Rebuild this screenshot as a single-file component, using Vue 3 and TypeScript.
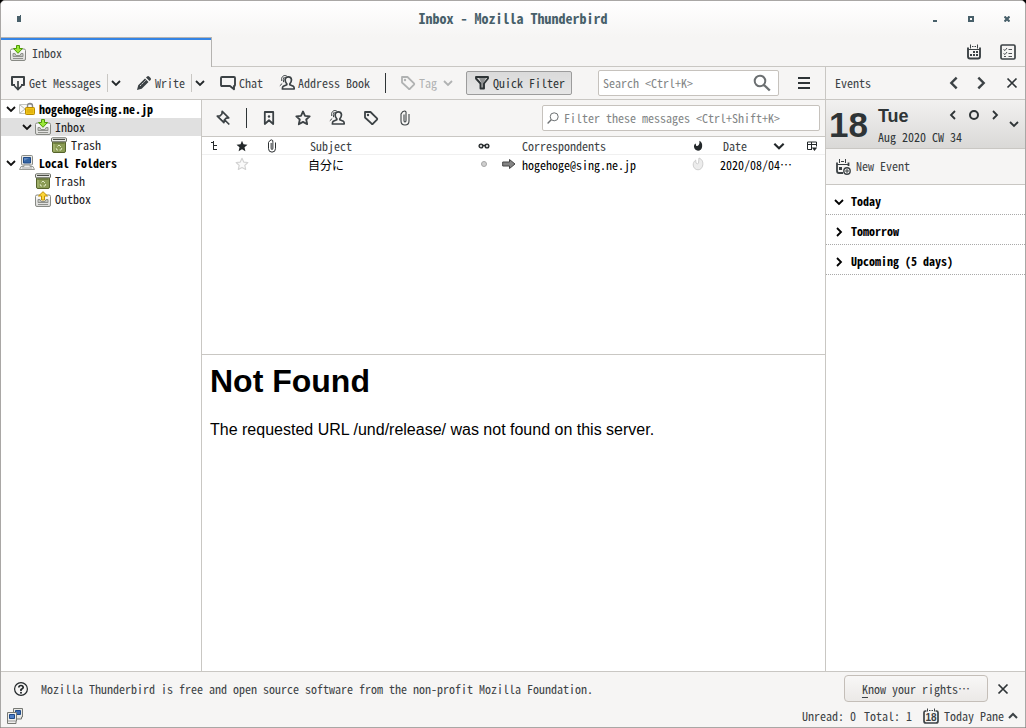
<script setup lang="ts">
import { ref } from 'vue'

interface Folder {
  name: string
  icon: string
  level: number
  account?: boolean
  open?: boolean
}

const folders: Folder[] = [
  { name: 'hogehoge@sing.ne.jp', icon: 'account', level: 0, account: true, open: true },
  { name: 'Inbox', icon: 'inbox', level: 1, open: true },
  { name: 'Trash', icon: 'trash', level: 2 },
  { name: 'Local Folders', icon: 'computer', level: 0, account: true, open: true },
  { name: 'Trash', icon: 'trash', level: 1 },
  { name: 'Outbox', icon: 'outbox', level: 1 },
]
const selected = ref(1)

const quickFilters = [
  { icon: 'bookmark', label: 'Unread' },
  { icon: 'star', label: 'Starred' },
  { icon: 'contact', label: 'Contact' },
  { icon: 'tag', label: 'Tags' },
  { icon: 'clip', label: 'Attachment' },
]

const agenda = ref([
  { name: 'Today', open: true },
  { name: 'Tomorrow', open: false },
  { name: 'Upcoming (5 days)', open: false },
])

const search = ref('')
const filter = ref('')
</script>

<template>
  <svg class="sprite" aria-hidden="true">
    <linearGradient id="paper" x1="0" y1="0" x2="0" y2="1">
      <stop offset="0" stop-color="#fff" /><stop offset="1" stop-color="#d8d8d5" />
    </linearGradient>
    <symbol id="down" viewBox="0 0 12 12"><path d="M2 4l4 4 4-4" fill="none" stroke="currentColor" stroke-width="1.800" /></symbol>
    <symbol id="right" viewBox="0 0 12 12"><path d="M4 2l4 4-4 4" fill="none" stroke="currentColor" stroke-width="1.800" /></symbol>
    <symbol id="left" viewBox="0 0 12 12"><path d="M8 2L4 6l4 4" fill="none" stroke="currentColor" stroke-width="1.800" /></symbol>
    <symbol id="up" viewBox="0 0 12 12"><path d="M2 8l4-4 4 4" fill="none" stroke="currentColor" stroke-width="2" /></symbol>
    <symbol id="close" viewBox="0 0 12 12"><path d="M1.500 1.500l9 9M10.500 1.500l-9 9" fill="none" stroke="currentColor" stroke-width="1.700" /></symbol>
    <symbol id="get" viewBox="0 0 16 16">
      <path d="M5 10H2V2h12v8h-3" fill="none" stroke="currentColor" stroke-width="2" stroke-linejoin="round" />
      <path d="M8 6v8.500M4.500 11L8 14.500l3.500-3.500" fill="none" stroke="currentColor" stroke-width="1.700" />
    </symbol>
    <symbol id="pencil" viewBox="0 0 16 16">
      <path d="M1 15l1.200-4.700L9 3.500l3.500 3.500-6.800 6.800zM10 2.500l1.100-1.100q1-.9 2 0l1.500 1.500q.9 1 0 2L13.500 6z" fill="currentColor" />
      <path d="M4 11l6-6" stroke="#f6f5f4" stroke-width=".8" stroke-dasharray="2 1" />
    </symbol>
    <symbol id="chat" viewBox="0 0 16 16"><path d="M2 2h12q1 0 1 1v7q0 1-1 1v3.200L10 11H2q-1 0-1-1V3q0-1 1-1z" fill="none" stroke="currentColor" stroke-width="1.900" stroke-linejoin="round" /></symbol>
    <symbol id="contact" viewBox="0 0 16 16">
      <path d="M9.300 1.800c4 0 3.800 4.700 1.500 7v1l3.500 1.500q.9.500.9 2.700H3.400q0-2.200.9-2.700l3.500-1.500v-1c-2.300-2.300-2.500-7 1.500-7z" fill="none" stroke="currentColor" stroke-width="1.700" stroke-linejoin="round" />
      <path d="M7.500.6C4-.2 1.800 2.500 2.800 6M5.300 2Q3.600 4.200 4.600 7.200M3.200 8.500L.8 10.800" fill="none" stroke="currentColor" stroke-width="1" />
    </symbol>
    <symbol id="tag" viewBox="0 0 16 16">
      <path d="M2 2h5.500l6.500 6.300q.6.700 0 1.400l-4 4q-.7.600-1.400 0L2 7.500z" fill="none" stroke="currentColor" stroke-width="1.800" stroke-linejoin="round" />
      <circle cx="5" cy="5" r="1.200" fill="currentColor" />
    </symbol>
    <symbol id="funnel" viewBox="0 0 16 16">
      <path d="M5 3h7L9.500 8v5h-2V8z" fill="currentColor" opacity=".45" />
      <path d="M2 2h12v1.500L10 8.500v5H6.500V8.500L2 3.500z" fill="none" stroke="currentColor" stroke-width="1.900" stroke-linejoin="round" />
    </symbol>
    <symbol id="glass" viewBox="0 0 18 18"><circle cx="7" cy="7" r="5.300" fill="none" stroke="currentColor" stroke-width="2" /><path d="M11 11l5.800 5.500" stroke="currentColor" stroke-width="2.400" /></symbol>
    <symbol id="glass-thin" viewBox="0 0 12 12"><circle cx="7.200" cy="4.800" r="4" fill="none" stroke="currentColor" /><path d="M4.200 7.800L.6 11.400" stroke="currentColor" stroke-width="1.400" /></symbol>
    <symbol id="menu" viewBox="0 0 16 16"><path d="M2 3h12M2 8h12M2 13h12" stroke="currentColor" stroke-width="2" /></symbol>
    <symbol id="pin" viewBox="0 0 16 16"><path d="M7.200 2.300l6.500 6.500-2.500.4-1.900 1.900-.4 2.600-6.600-6.600 2.700-.3L6.900 5zM9.300 10.500l5 5" transform="translate(0 -1)" fill="none" stroke="currentColor" stroke-width="1.700" stroke-linejoin="round" /><path d="M2.500 6L8 11.500" stroke="currentColor" /></symbol>
    <symbol id="bookmark" viewBox="0 0 16 16"><path d="M3.800 2h8.400v12L8 10.300 3.800 14z" fill="none" stroke="currentColor" stroke-width="1.800" stroke-linejoin="round" /><circle cx="8" cy="6.500" r="1.200" fill="currentColor" /></symbol>
    <symbol id="star" viewBox="0 0 16 16"><path d="M8 1.500l2 4.300 4.700.5-3.500 3.200 1 4.700L8 11.900l-4.200 2.300 1-4.700L1.300 6.300 6 5.800z" fill="none" stroke="currentColor" stroke-width="1.800" stroke-linejoin="round" /></symbol>
    <symbol id="star-pale" viewBox="0 0 16 16"><path d="M8 1.500l2 4.300 4.700.5-3.500 3.200 1 4.700L8 11.900l-4.200 2.300 1-4.700L1.300 6.300 6 5.800z" fill="#fafafa" stroke="#d2d2d2" stroke-width="1.300" stroke-linejoin="round" /></symbol>
    <symbol id="clip" viewBox="0 0 16 16"><path d="M7 4.500v6q0 1.500 1 1.500t1-1.500V4Q9.500 1 7.500 1T4 4v7q0 4 4 4t4-4V4" fill="none" stroke="currentColor" stroke-width="1.100" /></symbol>
    <symbol id="star-solid" viewBox="0 0 12 12"><path d="M6 .8l1.500 3.500 4 .4-3 2.600.9 3.900L6 9.200l-3.400 2 .9-3.900-3-2.600 4-.4z" fill="currentColor" /></symbol>
    <symbol id="thread" viewBox="0 0 12 12"><path d="M2 2.500h3M4.500 1v9M5 5.500h3M5 9.500h3" stroke="currentColor" fill="none" stroke-width="1" /></symbol>
    <symbol id="glasses" viewBox="0 0 12 12"><circle cx="3" cy="6" r="1.900" fill="#ccc" stroke="currentColor" stroke-width="1.300" /><circle cx="9" cy="6" r="1.900" fill="#ccc" stroke="currentColor" stroke-width="1.300" /><path d="M4.500 5.500h3" stroke="currentColor" stroke-width="1.500" /></symbol>
    <symbol id="flame" viewBox="0 0 12 14"><path d="M7.500 1c3 1.500 3.700 4 3.300 6.800C10.400 11 8.500 12.500 6 12.500S1.500 10.800 1.300 8C1.200 6 2 4.800 3.200 4L4 7c2 .8 4.500-2 3.500-6z" fill="currentColor" /></symbol>
    <symbol id="flame-pale" viewBox="0 0 12 14"><path d="M7 1c3.500 1.500 4 4 3.800 6.800C10.400 11 8.500 12.800 6 12.800S1.300 10.800 1.200 8c0-2 .6-3.500 2.500-5L4 6l1.500 1 1-1z" fill="#ececec" stroke="#cacaca" stroke-width=".9" /></symbol>
    <symbol id="columns" viewBox="0 0 12 12"><path d="M6 9.500H1.500V2h9v4.500M1.500 4.500h9M5.500 2v7" fill="none" stroke="currentColor" stroke-width="1" /><path d="M5.800 7.500h5.400L8.500 11z" fill="currentColor" /></symbol>
    <symbol id="arrow" viewBox="0 0 14 12"><path d="M.7 4h6.800V1.500L13 6l-5.500 4.500V8H.7z" fill="#858585" stroke="#444" stroke-width="1" /></symbol>
    <symbol id="calendar" viewBox="0 0 16 16">
      <path d="M2 3.500v9q0 2 2 2h8q2 0 2-2v-9" fill="none" stroke="currentColor" stroke-width="1.900" /><path d="M4.500.5v4M11.500.5v4M6 2.500h1.500M8.500 2.500H10M2 5.500h12" stroke="currentColor" />
      <path d="M7 8h2M10 8h2M4 11h2M7 11h2M10 11h2" stroke="currentColor" stroke-width="1.800" />
    </symbol>
    <symbol id="tasks" viewBox="0 0 16 16"><rect x="1" y="1" width="14" height="14" rx="1.200" fill="none" stroke="currentColor" stroke-width="1.700" /><path d="M3.500 5.500L5 6.500 7 4M3.500 9.500L5 10.500 7 8M4 12.500h2M8.500 5.500H12M8.500 9.500H12M8.500 12.500H12" fill="none" stroke="currentColor" stroke-width=".9" /></symbol>
    <symbol id="new-event" viewBox="0 0 16 16">
      <path d="M8 14H4Q2 14 2 12V3.500M13.500 3.500V7" fill="none" stroke="currentColor" stroke-width="1.800" /><path d="M4.500 0v4M10.500 0v4M6 2.500h3M2 5.500h11" stroke="currentColor" />
      <path d="M4 8h3v3H4z" fill="currentColor" /><circle cx="12" cy="12" r="3.200" fill="none" stroke="currentColor" stroke-width="1.400" /><path d="M12 10v4M10 12h4" stroke="currentColor" />
    </symbol>
    <symbol id="inbox" viewBox="0 0 16 16">
      <path d="M2 4h12q1.500 0 1.500 1.500V14q0 1.500-1.500 1.500H2Q.5 15.500.5 14V5.500Q.5 4 2 4z" fill="url(#paper)" stroke="#888a85" /><path d="M3 8.500h2l1 2h4l1-2h2v3H3zM3 13.500h10" fill="#c4c6c1" stroke="#8f918c" />
      <path d="M6.500.5h3v3h3L8 8.300 3.500 3.500h3z" fill="#9be83b" stroke="#4e9a06" />
    </symbol>
    <symbol id="outbox" viewBox="0 0 16 16">
      <path d="M2 4h12q1.500 0 1.500 1.500V14q0 1.500-1.500 1.500H2Q.5 15.500.5 14V5.500Q.5 4 2 4z" fill="url(#paper)" stroke="#888a85" /><path d="M3 8.500h2l1 2h4l1-2h2v3H3zM3 13.500h10" fill="#c4c6c1" stroke="#8f918c" />
      <path d="M6.500 9h3V5h3L8 .7 3.500 5h3z" fill="#fcd63a" stroke="#c49102" />
    </symbol>
    <symbol id="trash" viewBox="0 0 16 16">
      <path d="M1.500 4.500h13v9.500q0 1.500-1.500 1.500H3q-1.500 0-1.500-1.500z" fill="#8b9c55" stroke="#55632b" /><path d="M2.500 6h11" stroke="#55632b" /><path d="M3 7v7.500" stroke="#b3c17e" /><path d="M1.500.8h13q1 0 1 1V4q0 .8-1 .8h-13q-1 0-1-.8V1.800q0-1 1-1z" fill="#e8e9e5" stroke="#6b6e66" /><path d="M2 2.500h12" stroke="#4a4d46" stroke-width="1.200" />
      <path d="M6.500 9.500L8 8l2 2M10.800 11L10 13H8.500M7 13H5.800l-.6-1.800" fill="none" stroke="#dfe8c2" />
    </symbol>
    <symbol id="account" viewBox="0 0 16 16">
      <path d="M.5 3.500h13v9H.5z" fill="#fafafa" stroke="#c3c5c0" /><path d="M1 4l5 4-5 4" fill="none" stroke="#b5b7b2" /><path d="M8.500 7.500V5q0-2.500 2.500-2.500T13.500 5v2.500" fill="none" stroke="#888" stroke-width="1.400" /><rect x="6.500" y="6.500" width="9" height="7" rx=".8" fill="#f0c419" stroke="#b88a00" /><path d="M8 9h6M8 11h6" stroke="#d6a409" />
    </symbol>
    <symbol id="computer" viewBox="0 0 16 16">
      <rect x="2.500" y=".5" width="11" height="9.500" rx="1" fill="#e8e8e5" stroke="#888a85" /><path d="M4.500 2.500h7v5.500h-7z" fill="#3465a4" stroke="#204a87" /><path d="M5 3h5L5 6z" fill="#6289c0" /><path d="M5 10h6v1.500h3l1.500 3H.5l1.500-3h3z" fill="#ececea" stroke="#9a9c97" /><path d="M3 13h10" stroke="#aaa" />
    </symbol>
    <symbol id="online" viewBox="0 0 16 16">
      <path d="M6.500.5h9v8.500h-1v2h-7V9h-1z" fill="#e8e8e5" stroke="#777974" /><path d="M8.500 2.500h5v4h-5z" fill="#3f6db5" stroke="#204a87" /><path d="M.5 4.500h9V13h-.5v2.500H.5z" fill="#eeeeec" stroke="#777974" /><path d="M2.500 6.500h5v4h-5z" fill="#4f7fc6" stroke="#204a87" /><path d="M1 13h8" stroke="#999" />
    </symbol>
    <symbol id="help" viewBox="0 0 16 16"><circle cx="8" cy="8" r="6.400" fill="none" stroke="currentColor" stroke-width="1.200" /><path d="M5.800 6.500Q6 4.500 8 4.500t2.200 2Q10.200 7.500 8 8.500v1.500" fill="none" stroke="currentColor" stroke-width="1.700" /><circle cx="8" cy="11.800" r="1" fill="currentColor" /></symbol>
    <symbol id="day-frame" viewBox="0 0 16 16"><path d="M3.500 3H2.500Q1 3 1 4.500V13q0 2 2 2h10q2 0 2-2V4.500Q15 3 13.500 3h-1" fill="none" stroke="currentColor" stroke-width="1.700" /><path d="M4.500.5v3M11.500.5v3M6 2.500h1.500M8.500 2.500H10" stroke="currentColor" /></symbol>
  </svg>

  <div class="window">
    <header class="titlebar">
      <button class="win-menu" aria-label="Window menu"><svg viewBox="0 0 6 8"><path d="M1 1h3V0h1v7H1z" fill="currentColor" /></svg></button>
      <h1>Inbox - Mozilla Thunderbird</h1>
      <div class="controls">
        <button aria-label="Minimize"><svg viewBox="0 0 6 6"><path d="M1 4h4v2H1z" fill="currentColor" /></svg></button>
        <button aria-label="Maximize"><svg viewBox="0 0 6 6"><path d="M1 1h4v4H1z" fill="none" stroke="currentColor" stroke-width="2" /></svg></button>
        <button aria-label="Close"><svg viewBox="0 0 6 6"><path d="M.5.5l5 5M5.500.5l-5 5" stroke="currentColor" stroke-width="2.200" /></svg></button>
      </div>
    </header>

    <nav class="tabs">
      <button class="tab"><svg class="i16"><use href="#inbox" /></svg><span>Inbox</span></button>
      <div class="tab-tools">
        <button aria-label="Calendar"><svg class="i16"><use href="#calendar" /></svg></button>
        <button aria-label="Tasks"><svg class="i16"><use href="#tasks" /></svg></button>
      </div>
    </nav>

    <div class="body">
      <div class="mail">
        <div class="toolbar">
          <button class="tool"><svg class="i16"><use href="#get" /></svg>Get Messages</button>
          <button class="drop" aria-label="Get Messages options"><svg class="i12"><use href="#down" /></svg></button>
          <button class="tool"><svg class="i16"><use href="#pencil" /></svg>Write</button>
          <button class="drop" aria-label="Write options"><svg class="i12"><use href="#down" /></svg></button>
          <button class="tool"><svg class="i16"><use href="#chat" /></svg>Chat</button>
          <button class="tool address"><svg class="i16"><use href="#contact" /></svg>Address Book</button>
          <span class="bar"></span>
          <button class="tool tag" disabled><svg class="i16"><use href="#tag" /></svg>Tag<svg class="i12"><use href="#down" /></svg></button>
          <button class="tool quick" aria-pressed="true"><svg class="i16"><use href="#funnel" /></svg>Quick Filter</button>
          <label class="field search">
            <input v-model="search" type="text" placeholder="Search <Ctrl+K>" aria-label="Search" />
            <svg class="i18"><use href="#glass" /></svg>
          </label>
          <button class="menu" aria-label="Menu"><svg class="i16"><use href="#menu" /></svg></button>
        </div>

        <div class="panes">
          <ul class="tree">
            <li v-for="(f, i) in folders" :key="i">
              <button :class="['folder', 'level' + f.level, { account: f.account, selected: i === selected }]" @click="selected = i">
                <svg class="i12"><use v-if="f.open" href="#down" /></svg>
                <svg class="i16"><use :href="'#' + f.icon" /></svg>
                <span>{{ f.name }}</span>
              </button>
            </li>
          </ul>

          <main class="content">
            <section class="list">
              <div class="filterbar">
                <button aria-label="Keep filters"><svg class="i16"><use href="#pin" /></svg></button>
                <span class="bar"></span>
                <button v-for="q in quickFilters" :key="q.icon" :aria-label="q.label"><svg class="i16"><use :href="'#' + q.icon" /></svg></button>
                <label class="field filter">
                  <svg class="i12"><use href="#glass-thin" /></svg>
                  <input v-model="filter" type="text" placeholder="Filter these messages <Ctrl+Shift+K>" aria-label="Filter these messages" />
                </label>
              </div>
              <table>
                <colgroup>
                  <col class="c-thread" /><col class="c-star" /><col class="c-clip" /><col /><col class="c-read" /><col class="c-corr" /><col class="c-junk" /><col class="c-date" /><col class="c-pick" />
                </colgroup>
                <thead>
                  <tr>
                    <th aria-label="Thread"><svg class="i12"><use href="#thread" /></svg></th>
                    <th aria-label="Starred"><svg class="i12"><use href="#star-solid" /></svg></th>
                    <th aria-label="Attachment"><svg class="i14"><use href="#clip" /></svg></th>
                    <th class="subject">Subject</th>
                    <th aria-label="Read"><svg class="i12"><use href="#glasses" /></svg></th>
                    <th class="corr">Correspondents</th>
                    <th aria-label="Junk"><svg class="i12"><use href="#flame" /></svg></th>
                    <th class="date"><div>Date<svg class="i14"><use href="#down" /></svg></div></th>
                    <th aria-label="Columns"><svg class="i12"><use href="#columns" /></svg></th>
                  </tr>
                </thead>
                <tbody>
                  <tr>
                    <td></td>
                    <td><svg class="i14"><use href="#star-pale" /></svg></td>
                    <td></td>
                    <td class="subject">自分に</td>
                    <td><i class="dot"></i></td>
                    <td class="corr"><div><svg class="i14"><use href="#arrow" /></svg>hogehoge@sing.ne.jp</div></td>
                    <td><svg class="i14"><use href="#flame-pale" /></svg></td>
                    <td class="date">2020/08/04…</td>
                    <td></td>
                  </tr>
                </tbody>
              </table>
            </section>
            <article class="preview">
              <h2>Not Found</h2>
              <p>The requested URL /und/release/ was not found on this server.</p>
            </article>
          </main>
        </div>
      </div>

      <aside class="events">
        <div class="events-head">
          <span>Events</span>
          <button aria-label="Previous"><svg class="i16"><use href="#left" /></svg></button>
          <button aria-label="Next"><svg class="i16"><use href="#right" /></svg></button>
          <button class="shut" aria-label="Close"><svg class="i12"><use href="#close" /></svg></button>
        </div>
        <div class="day">
          <strong>18</strong>
          <div class="day-info">
            <div class="day-top">
              <b>Tue</b>
              <button aria-label="Previous day"><svg class="i12"><use href="#left" /></svg></button>
              <button aria-label="Go to today"><svg class="i12" viewBox="0 0 12 12"><circle cx="6" cy="6" r="4" fill="none" stroke="currentColor" stroke-width="2" /></svg></button>
              <button aria-label="Next day"><svg class="i12"><use href="#right" /></svg></button>
            </div>
            <span>Aug 2020 CW 34</span>
          </div>
          <button class="mini" aria-label="Show month"><svg class="i12"><use href="#down" /></svg></button>
        </div>
        <button class="new-event"><svg class="i16"><use href="#new-event" /></svg><span>New Event</span></button>
        <ul class="agenda">
          <li v-for="a in agenda" :key="a.name">
            <button @click="a.open = !a.open"><svg class="i12"><use :href="a.open ? '#down' : '#right'" /></svg><span>{{ a.name }}</span></button>
          </li>
        </ul>
      </aside>
    </div>

    <div class="notice">
      <svg class="i16"><use href="#help" /></svg>
      <span>Mozilla Thunderbird is free and open source software from the non-profit Mozilla Foundation.</span>
      <button class="rights"><u>K</u>now your rights<span class="dots">…</span></button>
      <button class="shut" aria-label="Dismiss"><svg class="i12"><use href="#close" /></svg></button>
    </div>
    <footer class="status">
      <svg class="i16"><use href="#online" /></svg>
      <span class="unread">Unread: 0</span>
      <span>Total: 1</span>
      <button class="today"><span class="day-icon"><svg class="i16"><use href="#day-frame" /></svg><b>18</b></span>Today Pane<svg class="i12"><use href="#up" /></svg></button>
    </footer>
  </div>
</template>

<style>
body {
  background: #000;
}
</style>

<style scoped>
* {
  box-sizing: border-box;
}
.sprite {
  position: absolute;
  width: 0;
  height: 0;
}
svg {
  display: block;
  flex: none;
}
.i12 { width: 12px; height: 12px; }
.i14 { width: 14px; height: 14px; }
.i16 { width: 16px; height: 16px; }
.i18 { width: 18px; height: 18px; }
button,
input {
  font: inherit;
  color: inherit;
  background: none;
  border: 0;
  padding: 0;
  margin: 0;
  white-space: nowrap;
}
ul {
  list-style: none;
  margin: 0;
  padding: 0;
}
.window {
  display: flex;
  flex-direction: column;
  height: 100vh;
  border: 1px solid #a9a7a5;
  border-radius: 5px 5px 0 0;
  background: #f6f5f4;
  color: #3c4245;
  font: 12px/18px "Noto Sans Mono CJK JP", "Liberation Mono", "Noto Sans CJK JP", monospace;
  overflow: hidden;
}
.titlebar {
  display: grid;
  grid-template-columns: 120px 1fr 120px;
  align-items: center;
  height: 36px;
  flex: none;
  background: linear-gradient(#fff, #f6f5f4);
  color: #48606a;
}
.titlebar h1 {
  margin: 0;
  padding-bottom: 2px;
  font-size: 14px;
  line-height: 20px;
  text-align: center;
}
.titlebar svg { width: 6px; height: 6px; }
.win-menu { padding-left: 15px; text-align: left; }
.titlebar .win-menu svg { height: 8px; }
.controls {
  display: flex;
  justify-content: flex-end;
  gap: 30px;
  padding-right: 15px;
}
.tabs {
  display: flex;
  justify-content: space-between;
  height: 30px;
  flex: none;
  border-bottom: 1px solid #c9c7c3;
}
.tab {
  display: flex;
  align-items: center;
  gap: 6px;
  width: 211px;
  height: 30px;
  padding: 0 9px 1px;
  border-top: 1px solid #b5b3b0;
  border-right: 1px solid #b5b3b0;
  background: linear-gradient(#3584e4 2px, #f6f5f4 2px);
}
.tab svg { margin-top: 2px; }
.tab span { padding-top: 1px; }
.tab-tools {
  display: flex;
  align-items: center;
  gap: 18px;
  padding-right: 9px;
}
.body {
  display: flex;
  flex: 1;
  min-height: 0;
}
.mail {
  display: flex;
  flex-direction: column;
  flex: 1;
  min-width: 0;
}
.toolbar {
  display: flex;
  align-items: center;
  height: 33px;
  flex: none;
  padding: 0 13px 0 9px;
  border-bottom: 1px solid #c9c7c3;
}
.tool {
  display: flex;
  align-items: center;
  gap: 3px;
}
.drop {
  margin: 0 14px 0 6px;
  padding: 3px 0 3px 2px;
  border-left: 1px solid #c9c7c3;
}
.drop svg { color: #23282a; }
.address { margin-left: 16px; }
.bar {
  width: 1px;
  height: 20px;
  background: #2e3436;
}
.toolbar .bar { margin: 0 14px 0 15px; }
.tag { color: #b0b2b2; }
.tag .i12 { margin-left: 2px; }
.quick {
  margin: 0 26px 0 12px;
  height: 24px;
  padding: 0 6px 0 7px;
  border: 1px solid #9c9c9c;
  border-radius: 2px;
  background: linear-gradient(#dadada, #e6e6e6);
  color: #2e3436;
}
.field {
  display: flex;
  align-items: center;
  height: 26px;
  border: 1px solid #c6c2bd;
  border-radius: 2px;
  background: #fff;
}
.field input {
  flex: 1;
  min-width: 0;
  height: 22px;
  padding-bottom: 2px;
  outline: none;
}
.field input::placeholder {
  color: #828586;
  opacity: 1;
}
.search {
  flex: 1;
  min-width: 0;
  padding: 0 7px 0 4px;
}
.field svg { color: #6c7072; }
.menu { margin-left: 17px; color: #2e3436; }
.panes {
  display: flex;
  flex: 1;
  min-height: 0;
}
.tree {
  width: 200px;
  flex: none;
  background: #fff;
}
.folder {
  display: flex;
  align-items: center;
  width: 100%;
  height: 18px;
  padding-left: 4px;
  color: #1c2022;
}
.folder .i12 { margin-right: 2px; color: #111; }
.folder span { margin-left: 4px; }
.level1 { padding-left: 20px; }
.level2 { padding-left: 36px; }
.account { font-weight: bold; color: #000; }
.selected { background: #e0e0e0; }
.content {
  display: flex;
  flex-direction: column;
  flex: 1;
  min-width: 0;
  border-left: 1px solid #c9c7c3;
  background: #fff;
}
.list {
  height: 255px;
  flex: none;
  border-bottom: 1px solid #c9c7c3;
}
.filterbar {
  display: flex;
  align-items: center;
  height: 37px;
  padding: 0 5px 0 4px;
  border-bottom: 1px solid #c9c7c3;
  background: #f6f5f4;
}
.filterbar button {
  display: flex;
  justify-content: center;
  width: 34px;
}
.filterbar .bar { margin: 0 5px 0 6px; }
.filter {
  width: 278px;
  margin-left: auto;
  padding-left: 4px;
}
.filter input { margin-left: 5px; }
table {
  width: 100%;
  table-layout: fixed;
  border-collapse: separate;
  border-spacing: 0;
}
.c-thread { width: 25px; }
.c-star { width: 30px; }
.c-clip { width: 30px; }
.c-read { width: 26px; }
.c-corr { width: 188px; }
.c-junk { width: 26px; }
.c-date { width: 88px; }
.c-pick { width: 26px; }
th,
td {
  height: 18px;
  padding: 0;
  line-height: 17px;
  font-weight: normal;
  text-align: left;
  white-space: nowrap;
}
th { border-bottom: 1px solid #f0f0f0; }
td { color: #000; }
th > svg,
td > svg { margin: 0 auto; color: #23282a; }
th.subject { padding-left: 23px; }
td.subject { padding-left: 21px; }
th.corr { padding-left: 25px; }
td.corr { padding-left: 5px; }
td.corr div {
  display: flex;
  align-items: center;
  gap: 6px;
}
th.date { padding-left: 12px; }
td.date { padding-left: 9px; }
th.date div {
  display: flex;
  align-items: center;
  justify-content: space-between;
  padding-right: 13px;
}
th.date svg { color: #23282a; }
.dot {
  display: block;
  width: 6px;
  height: 6px;
  margin: 0 auto;
  border: 1px solid #a5a5a5;
  border-radius: 50%;
  background: #cfcfcf;
}
.preview {
  flex: 1;
  padding: 8px;
  color: #000;
  font: 16px/18px "Liberation Sans", Arial, sans-serif;
}
.preview h2 {
  margin: 0 0 21px;
  font-size: 32px;
  line-height: 37px;
}
.preview p { margin: 0; }
.events {
  display: flex;
  flex-direction: column;
  width: 200px;
  flex: none;
  border-left: 1px solid #c9c7c3;
  background: #fff;
}
.events-head {
  display: flex;
  align-items: center;
  gap: 11px;
  height: 33px;
  flex: none;
  padding: 0 7px 0 9px;
  border-bottom: 1px solid #c9c7c3;
  background: #f6f5f4;
}
.events-head span {
  flex: 1;
  padding-bottom: 1px;
}
.events-head .shut { margin-left: 6px; }
.shut { color: #2e3436; }
.day {
  display: flex;
  height: 49px;
  flex: none;
  padding: 0 5px 0 3px;
  border-bottom: 1px solid #c9c7c3;
  background: linear-gradient(#f2f1f0, #dad9d7);
  color: #2e3436;
}
.day strong {
  font: bold 35px/50px "Liberation Sans", Arial, sans-serif;
  color: #2e3436;
}
.day-info {
  flex: 1;
  margin-left: 10px;
}
.day-top {
  display: flex;
  align-items: center;
  gap: 9px;
  height: 29px;
}
.day-top b {
  flex: 1;
  padding-top: 3px;
  font: bold 18px/20px "Liberation Sans", Arial, sans-serif;
}
.day-info span {
  display: block;
  line-height: 16px;
}
.mini { margin-left: 7px; }
.new-event {
  display: flex;
  align-items: center;
  gap: 5px;
  height: 36px;
  flex: none;
  padding: 0 9px;
  border-bottom: 1px solid #c9c7c3;
  background: #f6f5f4;
}
.new-event span { padding-bottom: 1px; }
.agenda li { border-bottom: 1px dotted #a9a9a9; }
.agenda button {
  display: flex;
  align-items: center;
  gap: 6px;
  width: 100%;
  height: 29px;
  padding: 4px 7px 0;
  color: #000;
  font-weight: bold;
}
.agenda span { padding-bottom: 1px; }
.notice {
  display: flex;
  align-items: center;
  height: 35px;
  flex: none;
  padding: 0 16px 1px 12px;
  border-top: 1px solid #c9c7c3;
}
.notice > span {
  flex: 1;
  margin-left: 12px;
}
.notice > svg { color: #23282a; }
.rights {
  height: 27px;
  margin-right: 9px;
  padding: 0 17px;
  border: 1px solid #c4beb8;
  border-radius: 4px;
  background: linear-gradient(#f8f7f6, #ebe9e7);
}
.rights u { text-underline-offset: 3px; }
.dots { display: inline-block; }
.status {
  display: flex;
  align-items: center;
  height: 21px;
  flex: none;
  padding: 0 6px 2px;
}
.unread {
  margin-left: auto;
  margin-right: 8px;
}
.today {
  display: flex;
  align-items: center;
  margin-left: 11px;
}
.day-icon {
  display: grid;
  place-items: center;
  margin-right: 5px;
}
.day-icon > * { grid-area: 1 / 1; }
.day-icon b {
  padding-top: 4px;
  font: bold 10px/12px "Liberation Sans", Arial, sans-serif;
}
.today > .i12 { margin-left: 3px; }
</style>
